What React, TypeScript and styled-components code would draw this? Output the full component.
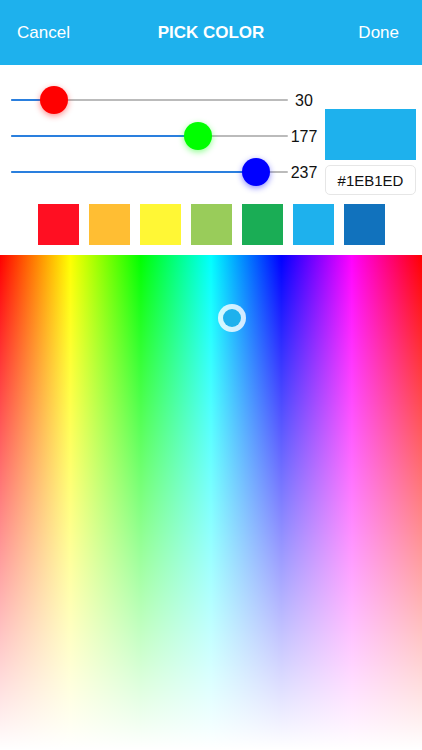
import { FC } from 'react';
import styled, { createGlobalStyle } from 'styled-components';

const GlobalStyle = createGlobalStyle`
  html, body {
    margin: 0;
    padding: 0;
    background: #fff;
    font-family: 'Liberation Sans', Arial, sans-serif;
  }
  * { box-sizing: border-box; }
`;

const THUMB = 28;

interface IChannel {
  value: number;
  color: string;
  glow: string;
}

const channels: IChannel[] = [
  { value: 30, color: '#ff0000', glow: 'rgba(255, 0, 0, 0.45)' },
  { value: 177, color: '#00ff00', glow: 'rgba(0, 255, 0, 0.45)' },
  { value: 237, color: '#0000ff', glow: 'rgba(0, 0, 255, 0.45)' },
];

const palette = ['#ff0f22', '#ffbe33', '#fff735', '#99cc5a', '#1aad55', '#1eb1ed', '#1172bd'];

const Slider: FC<IChannel> = ({ value, color, glow }) => {
  const ratio = value / 255;
  const pos = `calc(${THUMB / 2}px + (100% - ${THUMB}px) * ${ratio})`;
  return (
    <SliderRow>
      <Track>
        <Fill style={{ width: pos }} />
        <Thumb $color={color} $glow={glow} style={{ left: `calc(${pos} - ${THUMB / 2}px)` }} />
      </Track>
      <Value>{value}</Value>
    </SliderRow>
  );
};

const App: FC = () => (
  <>
    <GlobalStyle />
    <Screen>
      <Header>
        <HeaderButton>Cancel</HeaderButton>
        <Title>PICK COLOR</Title>
        <HeaderButton>Done</HeaderButton>
      </Header>
      <Controls>
        <Sliders>
          {channels.map((c) => (
            <Slider key={c.color} {...c} />
          ))}
        </Sliders>
        <Preview>
          <Swatch />
          <HexBox>#1EB1ED</HexBox>
        </Preview>
      </Controls>
      <Palette>
        {palette.map((c) => (
          <PaletteSquare key={c} $color={c} />
        ))}
      </Palette>
      <Spectrum>
        <Marker>
          <MarkerDot />
        </Marker>
      </Spectrum>
    </Screen>
  </>
);

export default App;

const Screen = styled.div`
  width: 422px;
  height: 750px;
  display: flex;
  flex-direction: column;
  overflow: hidden;
`;

const Header = styled.header`
  height: 65px;
  flex-shrink: 0;
  background: #1eb1ed;
  display: flex;
  align-items: center;
  justify-content: space-between;
  padding: 0 23px 0 17px;
  position: relative;
`;

const HeaderButton = styled.span`
  color: #fff;
  font-size: 17px;
`;

const Title = styled.h1`
  position: absolute;
  left: 0;
  right: 0;
  margin: 0;
  text-align: center;
  color: #fff;
  font-size: 17px;
  font-weight: 700;
  pointer-events: none;
`;

const Controls = styled.section`
  display: flex;
  gap: 5px;
  padding: 17px 6px 0 11px;
`;

const Sliders = styled.div`
  flex: 1;
  display: flex;
  flex-direction: column;
`;

const SliderRow = styled.div`
  height: 36px;
  display: flex;
  align-items: center;
`;

const Track = styled.div`
  position: relative;
  flex: 1;
  height: 2px;
  background: #bbbbbb;
  border-radius: 1px;
`;

const Fill = styled.div`
  height: 100%;
  background: #2a7fde;
  border-radius: 1px;
`;

const Thumb = styled.div<{ $color: string; $glow: string }>`
  position: absolute;
  top: ${1 - THUMB / 2}px;
  width: ${THUMB}px;
  height: ${THUMB}px;
  border-radius: 50%;
  background: ${(p) => p.$color};
  box-shadow: 0 2px 6px ${(p) => p.$glow};
`;

const Value = styled.span`
  width: 32px;
  text-align: center;
  font-size: 16px;
  color: #111;
  padding-top: 1px;
`;

const Preview = styled.div`
  width: 91px;
  margin-top: 27px;
  display: flex;
  flex-direction: column;
  gap: 5px;
`;

const Swatch = styled.div`
  height: 51px;
  background: #1eb1ed;
`;

const HexBox = styled.div`
  height: 30px;
  border: 1px solid #e6e6e6;
  border-radius: 5px;
  display: flex;
  align-items: center;
  justify-content: center;
  font-size: 15px;
  color: #111;
`;

const Palette = styled.div`
  display: flex;
  justify-content: center;
  gap: 10px;
  padding: 9px 0 10px;
`;

const PaletteSquare = styled.div<{ $color: string }>`
  width: 41px;
  height: 41px;
  background: ${(p) => p.$color};
`;

const Spectrum = styled.div`
  flex: 1;
  position: relative;
  background:
    linear-gradient(to bottom, rgba(255, 255, 255, 0), #ffffff),
    linear-gradient(to right, #ff0000, #ffff00, #00ff00, #00ffff, #0000ff, #ff00ff, #ff0000);
`;

const Marker = styled.div`
  position: absolute;
  left: 218px;
  top: 49px;
  width: 28px;
  height: 28px;
  border-radius: 50%;
  background: rgba(255, 255, 255, 0.8);
  display: flex;
  align-items: center;
  justify-content: center;
`;

const MarkerDot = styled.div`
  width: 18px;
  height: 18px;
  border-radius: 50%;
  background: #1eb1ed;
`;
